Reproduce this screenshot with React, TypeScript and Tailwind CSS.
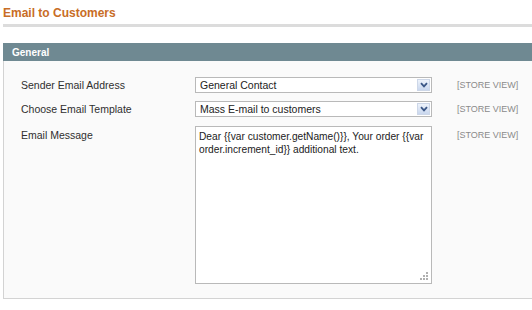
import React from "react";

const rows = [
  { label: "Sender Email Address", value: "General Contact" },
  { label: "Choose Email Template", value: "Mass E-mail to customers" },
];

const Chevron = () => (
  <svg width="8" height="6" viewBox="0 0 8 6">
    <path d="M1 1.2 L4 4.4 L7 1.2" fill="none" stroke="#3b5786" strokeWidth="1.8" />
  </svg>
);

const FakeSelect = ({ value }: { value: string }) => (
  <div className="flex h-[16px] w-[237px] items-center border border-[#b9b9b9] bg-white pl-[4px] text-[10.5px] text-[#222]">
    <span className="flex-1 leading-none">{value}</span>
    <div className="mr-[1px] flex h-[12px] w-[13px] items-center justify-center border border-[#cdd7e8] bg-gradient-to-b from-[#eef3fb] to-[#c9d7ee]">
      <Chevron />
    </div>
  </div>
);

export default function App() {
  return (
    <div className="h-[310px] w-[532px] overflow-hidden bg-white font-['Liberation_Sans',Arial,sans-serif] text-[#2f2f2f]">
      {/* page title */}
      <h3 className="ml-[3px] mt-[5px] text-[12px] font-bold leading-[16px] text-[#c86d26]">
        Email to Customers
      </h3>
      <div className="ml-[3px] mt-[3px] h-[3px] bg-[#dcdcdc]" />

      {/* fieldset */}
      <div className="ml-[3px] mt-[16px]">
        <div className="flex h-[18px] items-center bg-[#6f8992] px-[9px] text-[10px] font-bold text-white">
          General
        </div>
        <div className="h-[238px] border-b border-l border-[#d3d3d3] bg-[#fafafa] pl-[17px] pt-[16px]">
          <div className="flex flex-col gap-[8px]">
            {rows.map((row) => (
              <div key={row.label} className="flex h-[16px] items-center text-[10.5px] leading-[16px]">
                <div className="w-[174px]">{row.label}</div>
                <FakeSelect value={row.value} />
                <div className="ml-[25px] text-[9px] text-[#8a8a8a]">[STORE VIEW]</div>
              </div>
            ))}

            {/* message */}
            <div className="mt-[1px] flex items-start text-[10.5px] leading-[16px]">
              <div className="w-[174px] pt-[1px]">Email Message</div>
              <div className="relative h-[158px] w-[237px] border border-[#b9b9b9] bg-white px-[3px] pt-[3px] text-[10.2px] leading-[13px] whitespace-nowrap text-[#222]">
                Dear {"{{"}var customer.getName(){"}}"}, Your order {"{{"}var
                <br />
                order.increment_id{"}}"} additional text.
                <svg className="absolute bottom-[2px] right-[2px]" width="9" height="9" viewBox="0 0 9 9">
                  <g fill="#b0b0b0">
                    <rect x="6" y="0" width="2" height="2" />
                    <rect x="3" y="3" width="2" height="2" />
                    <rect x="6" y="3" width="2" height="2" />
                    <rect x="0" y="6" width="2" height="2" />
                    <rect x="3" y="6" width="2" height="2" />
                    <rect x="6" y="6" width="2" height="2" />
                  </g>
                </svg>
              </div>
              <div className="ml-[25px] pt-[1px] text-[9px] text-[#8a8a8a]">[STORE VIEW]</div>
            </div>
          </div>
        </div>
      </div>
    </div>
  );
}
